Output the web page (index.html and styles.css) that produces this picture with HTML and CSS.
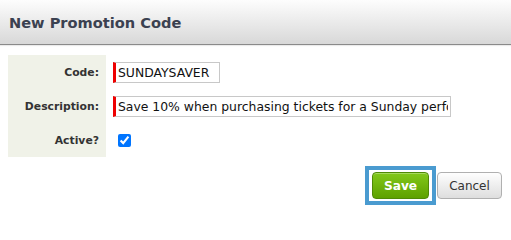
FILE: index.html
```html
<!DOCTYPE html>
<html>
<head>
<meta charset="utf-8">
<link rel="stylesheet" href="styles.css">
</head>
<body>
<div class="dialog">
  <div class="header"><h1 class="title">New Promotion Code</h1></div>
  <div class="body">
    <table class="form">
      <tr class="row-code">
        <th class="label">Code:</th>
        <td class="field"><input class="text code" type="text" value="SUNDAYSAVER"></td>
      </tr>
      <tr class="row-desc">
        <th class="label">Description:</th>
        <td class="field"><input class="text desc" type="text" value="Save 10% when purchasing tickets for a Sunday performance"></td>
      </tr>
      <tr class="row-active">
        <th class="label">Active?</th>
        <td class="field"><input class="check" type="checkbox" checked></td>
      </tr>
    </table>
    <div class="actions">
      <span class="focus-ring"><button class="btn btn-save">Save</button></span>
      <button class="btn btn-cancel">Cancel</button>
    </div>
  </div>
</div>
</body>
</html>
```

FILE: styles.css
```css
html, body {
  margin: 0;
  padding: 0;
  background: #fff;
}
body {
  font-family: "DejaVu Sans", Verdana, sans-serif;
  color: #333;
}
.header {
  height: 44px;
  background: linear-gradient(#fdfdfd, #d8d8d8);
  border-bottom: 1px solid #8a8a8a;
  box-shadow: 0 1px 1px rgba(0,0,0,0.08);
  display: flex;
  align-items: center;
  padding-left: 9px;
}
.title {
  margin: 0;
  font-size: 14.6px;
  font-weight: bold;
  color: #3b4150;
}
.body {
  padding: 10px 9px 0 8px;
}
.form {
  border-collapse: collapse;
  border-spacing: 0;
}
.label {
  width: 98px;
  box-sizing: border-box;
  background: #f0f2e8;
  text-align: right;
  padding: 0 7px 0 0;
  font-size: 10.8px;
  font-weight: bold;
  color: #333;
  white-space: nowrap;
}
.field {
  padding: 0 0 0 7px;
}
.row-code .field { height: 34px; }
.row-desc .field { height: 35px; }
.row-active .field { height: 33px; }
.text {
  box-sizing: border-box;
  height: 21px;
  margin: 0;
  border: 1px solid #c8c8c8;
  border-left: 3px solid #ee0000;
  padding: 0 2px;
  font-family: "DejaVu Sans", Verdana, sans-serif;
  font-size: 12.4px;
  color: #111;
  outline: none;
  display: block;
}
.code { width: 107px; }
.desc { width: 338px; }
.check {
  width: 13px;
  height: 13px;
  margin: 0 0 0 5px;
  display: block;
  accent-color: #0075ff;
}
.actions {
  display: flex;
  justify-content: flex-end;
  align-items: center;
  margin-top: 9px;
  gap: 1px;
}
.focus-ring {
  display: inline-flex;
  border: 4px solid #4a9bd0;
  padding: 2px 3px;
}
.btn {
  height: 27px;
  box-sizing: border-box;
  border-radius: 4px;
  font-family: "DejaVu Sans", Verdana, sans-serif;
  padding: 0;
  cursor: pointer;
}
.btn-save {
  width: 57px;
  font-size: 12.2px;
  background: linear-gradient(#82c81a, #5ea100);
  border: 1px solid #4f8a06;
  color: #fff;
  font-weight: bold;
  box-shadow: inset 0 1px 0 rgba(255,255,255,0.3);
}
.btn-cancel {
  width: 65px;
  font-size: 12px;
  background: linear-gradient(#fefefe, #dedede);
  border: 1px solid #b0b0b0;
  color: #333;
}
```
